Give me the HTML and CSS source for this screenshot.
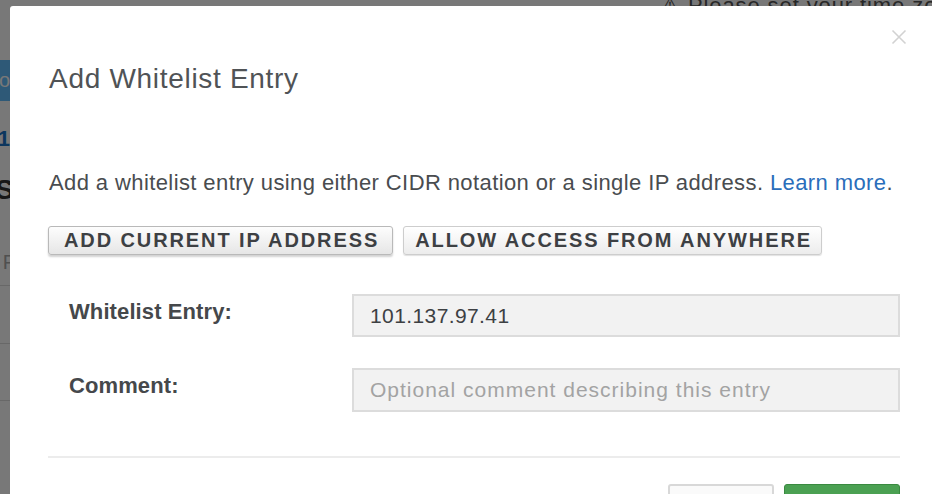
FILE: index.html
```html
<!DOCTYPE html>
<html>
<head>
<meta charset="utf-8">
<link rel="stylesheet" href="styles.css">
</head>
<body>
<div class="page">
  <div class="notice">&#9888; Please set your time zone in your account settings</div>
  <div class="side">
    <div class="side-btn">o</div>
    <div class="side-num">1</div>
    <div class="side-head">S</div>
    <div class="side-p">P</div>
    <div class="side-line l1"></div>
    <div class="side-line l2"></div>
    <div class="side-line l3"></div>
  </div>
</div>
<div class="overlay"></div>
<div class="modal">
  <button class="close" aria-label="Close">
    <svg width="16" height="16" viewBox="0 0 16 16"><path d="M1.5 1.5 L14.5 14.5 M14.5 1.5 L1.5 14.5" stroke="#d2d2d2" stroke-width="1.6" fill="none"/></svg>
  </button>
  <h2 class="title">Add Whitelist Entry</h2>
  <p class="intro">Add a whitelist entry using either CIDR notation or a single IP address. <a href="#">Learn more</a>.</p>
  <div class="actions">
    <button class="btn btn-active">ADD CURRENT IP ADDRESS</button>
    <button class="btn btn-any">ALLOW ACCESS FROM ANYWHERE</button>
  </div>
  <div class="form">
    <div class="row">
      <label class="label">Whitelist Entry:</label>
      <div class="input">101.137.97.41</div>
    </div>
    <div class="row">
      <label class="label">Comment:</label>
      <div class="input placeholder">Optional comment describing this entry</div>
    </div>
  </div>
  <div class="divider"></div>
  <div class="footer">
    <button class="fbtn cancel"></button>
    <button class="fbtn confirm"></button>
  </div>
</div>
</body>
</html>
```
FILE: styles.css
```css
html, body {
  margin: 0;
  padding: 0;
  width: 932px;
  height: 494px;
  overflow: hidden;
  background: #fff;
  font-family: "Liberation Sans", Arial, sans-serif;
}
.page {
  position: relative;
  width: 932px;
  height: 494px;
}
.notice {
  position: absolute;
  left: 660px;
  top: -7px;
  font-size: 22px;
  letter-spacing: 0.9px;
  color: #555;
  white-space: nowrap;
}
.side {
  position: absolute;
  left: -60px;
  top: 0;
  width: 70px;
  height: 494px;
}
.side-btn {
  position: absolute;
  top: 60px;
  left: 0;
  width: 70px;
  height: 41px;
  background: #63bdfc;
  color: #fff;
  font-size: 20px;
  line-height: 41px;
  text-align: right;
  box-sizing: border-box;
}
.side-num {
  position: absolute;
  top: 126px;
  left: 0;
  width: 70px;
  text-align: right;
  color: #1a74c8;
  font-weight: bold;
  font-size: 22px;
}
.side-head {
  position: absolute;
  top: 174px;
  right: -4px;
  color: #333;
  font-weight: bold;
  font-size: 28px;
}
.side-p {
  position: absolute;
  top: 251px;
  right: -6px;
  color: #aaa;
  font-size: 20px;
}
.side-line {
  position: absolute;
  left: 0;
  width: 80px;
  height: 1px;
  background: #ddd;
}
.l1 { top: 285px; }
.l2 { top: 343px; }
.l3 { top: 400px; }
.overlay {
  position: fixed;
  inset: 0;
  background: rgba(0, 0, 0, 0.53);
}
.modal {
  position: absolute;
  left: 10px;
  top: 6px;
  width: 928px;
  height: 600px;
  background: #fff;
  border-radius: 3px;
  box-sizing: border-box;
  padding: 55px 38px 0 38px;
  color: #494c4f;
}
.close {
  position: absolute;
  top: 23px;
  right: 31px;
  border: 0;
  background: none;
  padding: 0;
  width: 16px;
  height: 16px;
  cursor: pointer;
}
.close svg { display: block; }
.title {
  margin: 0 0 0 1px;
  font-size: 28px;
  line-height: 36px;
  font-weight: normal;
  color: #505356;
  letter-spacing: 0.7px;
}
.intro {
  margin: 73px 0 0 1px;
  font-size: 22px;
  line-height: 26px;
  letter-spacing: 0.4px;
  color: #494c4f;
  white-space: nowrap;
}
.intro a {
  color: #2a6ebb;
  text-decoration: none;
}
.actions {
  display: flex;
  gap: 10px;
  margin-top: 30px;
}
.btn {
  height: 29px;
  padding: 0 10px 0 11px;
  border: 1px solid #cdcdcd;
  border-radius: 3px;
  background: linear-gradient(#ffffff, #ececec);
  box-shadow: 0 1px 1px rgba(0,0,0,0.12);
  font-family: "Liberation Sans", Arial, sans-serif;
  font-weight: bold;
  font-size: 20px;
  color: #3d4043;
  letter-spacing: 1.9px;
  cursor: pointer;
  white-space: nowrap;
}
.btn-active {
  padding: 0 13px 0 15px;
  border-color: #b9b9b9;
  background: linear-gradient(#fdfdfd, #e6e6e6);
  box-shadow: 0 2px 2px rgba(0,0,0,0.18);
}
.btn-any {
  padding: 0 9px 0 11px;
}
.form {
  margin-top: 39px;
  display: flex;
  flex-direction: column;
  gap: 31px;
}
.row {
  display: flex;
  align-items: flex-start;
}
.label {
  width: 283px;
  padding-left: 21px;
  padding-top: 5px;
  font-size: 22px;
  line-height: 26px;
  font-weight: bold;
  letter-spacing: 0.1px;
  color: #45484b;
}
.input {
  flex: 1;
  height: 43px;
  box-sizing: border-box;
  border: 2px solid #dcdcdc;
  background: #f2f2f2;
  padding: 0 16px;
  font-size: 21px;
  line-height: 39px;
  letter-spacing: 0.4px;
  color: #3d4043;
  white-space: nowrap;
}
.input.placeholder {
  height: 44px;
  color: #a3a3a3;
  letter-spacing: 1px;
}
.divider {
  margin-top: 44px;
  height: 2px;
  background: #ececec;
}
.footer {
  display: flex;
  justify-content: flex-end;
  gap: 10px;
  margin-top: 26px;
}
.fbtn {
  height: 40px;
  border-radius: 3px;
  padding: 0;
}
.cancel {
  width: 106px;
  border: 2px solid #d8d8d8;
  background: #fafafa;
}
.confirm {
  width: 116px;
  border: 1px solid #3a8a40;
  background: #4ba052;
}
```
